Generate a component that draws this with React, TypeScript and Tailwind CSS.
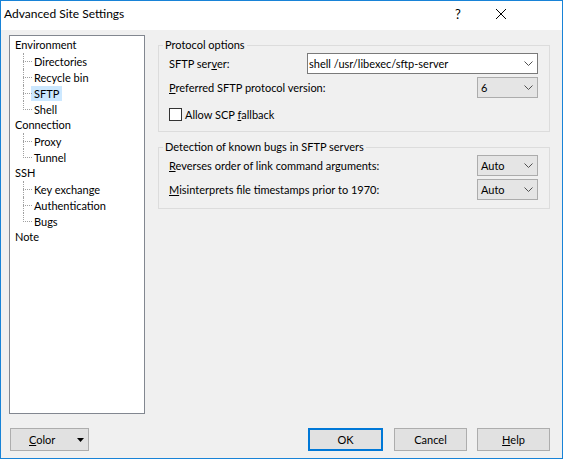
import React from "react";

const tree: { t: string; kids: string[] }[] = [
  { t: "Environment", kids: ["Directories", "Recycle bin", "SFTP", "Shell"] },
  { t: "Connection", kids: ["Proxy", "Tunnel"] },
  { t: "SSH", kids: ["Key exchange", "Authentication", "Bugs"] },
  { t: "Note", kids: [] },
];

function Chevron() {
  return (
    <svg width="9" height="5" viewBox="0 0 9 5" className="mr-[4px] shrink-0">
      <polyline points="0.5,0.5 4.5,4.5 8.5,0.5" fill="none" stroke="#505050" strokeWidth="1" />
    </svg>
  );
}

function Combo({ value, white }: { value: string; white?: boolean }) {
  return (
    <div
      className={
        white
          ? "h-[21px] w-[231px] flex items-center border border-[#7a7a7a] bg-white shrink-0"
          : "h-[21px] w-[61px] flex items-center border border-[#acacac] bg-[#e5e5e5] shrink-0"
      }
    >
      <span className={white ? "pl-[1px] flex-1 whitespace-nowrap" : "pl-[3px] flex-1 whitespace-nowrap"}>{value}</span>
      <Chevron />
    </div>
  );
}

function Btn({ children, primary }: { children: React.ReactNode; primary?: boolean }) {
  return (
    <div
      className={
        primary
          ? "h-[23px] w-[75px] flex items-center justify-center border-2 border-[#0078d7] bg-[#e1e1e1]"
          : "h-[23px] w-[73px] flex items-center justify-center border border-[#adadad] bg-[#e1e1e1]"
      }
    >
      {children}
    </div>
  );
}

export default function App() {
  return (
    <div className="w-[563px] h-[459px] border border-[#1883d7] flex flex-col bg-[#f0f0f0] text-[11px] leading-[16px] text-black font-['Lato',sans-serif]">
      {/* Title bar */}
      <div className="h-[29px] bg-white flex items-start shrink-0">
        <span className="ml-[3px] mt-[5px] text-[12px] leading-[16px]">Advanced Site Settings</span>
        <span className="ml-auto mt-[5px] w-[12px] text-center text-[13px] leading-[16px]">?</span>
        <svg width="10" height="10" viewBox="0 0 10 10" className="ml-[32px] mr-[56px] mt-[8px]">
          <line x1="0" y1="0" x2="10" y2="10" stroke="#000" strokeWidth="1" />
          <line x1="10" y1="0" x2="0" y2="10" stroke="#000" strokeWidth="1" />
        </svg>
      </div>

      {/* Body */}
      <div className="flex-1 flex flex-col pl-[8px] pr-[12px] pt-[5px] pb-[7px]">
        <div className="flex gap-[13px] h-[379px]">
          {/* Tree */}
          <div className="w-[136px] h-full border border-[#828790] bg-white pt-[1px] shrink-0">
            {tree.map((g) => (
              <div key={g.t}>
                <div className="h-[16px] pl-[5px] flex items-center">{g.t}</div>
                {g.kids.map((k, i) => {
                  const last = i === g.kids.length - 1;
                  const sel = k === "SFTP";
                  return (
                    <div key={k} className="h-[16px] pl-[13px] flex items-center">
                      <div className="relative w-[8px] h-[16px] shrink-0">
                        <div
                          className={
                            last
                              ? "absolute left-0 top-0 h-[9px] border-l border-dotted border-[#a0a0a0]"
                              : "absolute left-0 top-0 h-[16px] border-l border-dotted border-[#a0a0a0]"
                          }
                        />
                        <div className="absolute left-0 top-[8px] w-[9px] border-t border-dotted border-[#a0a0a0]" />
                      </div>
                      <span
                        className={
                          sel
                            ? "px-[3px] h-[15px] leading-[15px] bg-[#cce8ff]"
                            : "px-[3px] h-[15px] leading-[15px]"
                        }
                      >
                        {k}
                      </span>
                    </div>
                  );
                })}
              </div>
            ))}
          </div>

          {/* Right column */}
          <div className="flex-1 flex flex-col pt-[2px]">
            <fieldset className="border border-[#dcdcdc] pl-[4px] pr-[11px] pb-[10px] m-0 min-w-0">
              <legend className="px-[2px] leading-[16px]">Protocol options</legend>
              <div className="pl-[6px] flex flex-col">
                <div className="h-[21px] flex items-center">
                  <span className="flex-1">
                    SFTP ser<span className="underline">v</span>er:
                  </span>
                  <Combo value="shell /usr/libexec/sftp-server" white />
                </div>
                <div className="h-[21px] mt-[3px] flex items-center">
                  <span className="flex-1">
                    <span className="underline">P</span>referred SFTP protocol version:
                  </span>
                  <Combo value="6" />
                </div>
                <div className="h-[13px] mt-[10px] flex items-center">
                  <div className="w-[13px] h-[13px] border border-[#333333] bg-white shrink-0" />
                  <span className="ml-[3px]">
                    Allow SCP <span className="underline">f</span>allback
                  </span>
                </div>
              </div>
            </fieldset>

            <fieldset className="mt-[7px] border border-[#dcdcdc] pl-[4px] pr-[11px] pb-[8px] m-0 min-w-0">
              <legend className="px-[2px] leading-[16px]">Detection of known bugs in SFTP servers</legend>
              <div className="pl-[6px] flex flex-col">
                <div className="h-[21px] flex items-center">
                  <span className="flex-1">
                    <span className="underline">R</span>everses order of link command arguments:
                  </span>
                  <Combo value="Auto" />
                </div>
                <div className="h-[21px] mt-[3px] flex items-center">
                  <span className="flex-1">
                    <span className="underline">M</span>isinterprets file timestamps prior to 1970:
                  </span>
                  <Combo value="Auto" />
                </div>
              </div>
            </fieldset>
          </div>
        </div>

        {/* Buttons */}
        <div className="mt-[14px] h-[23px] flex items-center">
          <div className="ml-[1px] h-[23px] w-[79px] flex items-center border border-[#adadad] bg-[#e1e1e1] pl-[18px]">
            <span>
              <span className="underline">C</span>olor
            </span>
            <svg width="7" height="4" viewBox="0 0 7 4" className="ml-auto mr-[4px]">
              <polygon points="0,0 7,0 3.5,4" fill="#000" />
            </svg>
          </div>
          <div className="ml-auto">
            <Btn primary>OK</Btn>
          </div>
          <div className="ml-[11px]">
            <Btn>Cancel</Btn>
          </div>
          <div className="ml-[10px]">
            <Btn>
              <span>
                <span className="underline">H</span>elp
              </span>
            </Btn>
          </div>
        </div>
      </div>
    </div>
  );
}
